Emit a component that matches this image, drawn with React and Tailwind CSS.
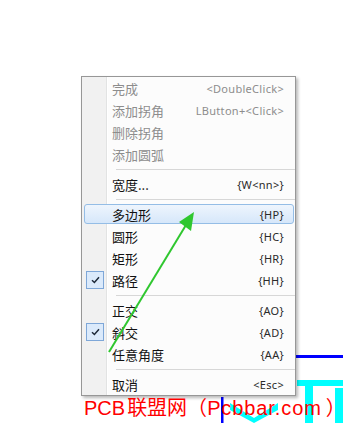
import React from "react";

const items = [
  { label: "完成", key: "<DoubleClick>", disabled: true },
  { label: "添加拐角", key: "LButton+<Click>", disabled: true },
  { label: "删除拐角", disabled: true },
  { label: "添加圆弧", disabled: true },
  { sep: true },
  { label: "宽度...", key: "{W<nn>}" },
  { sep: true },
  { label: "多边形", key: "{HP}", hot: true },
  { label: "圆形", key: "{HC}" },
  { label: "矩形", key: "{HR}" },
  { label: "路径", key: "{HH}", checked: true },
  { sep: true },
  { label: "正交", key: "{AO}" },
  { label: "斜交", key: "{AD}", checked: true },
  { label: "任意角度", key: "{AA}" },
  { sep: true },
  { label: "取消", key: "<Esc>" },
];

function Check() {
  return (
    <div className="ml-[1px] flex h-[18px] w-[18px] items-center justify-center border border-[#7ea7d8] bg-[#dbeafb]">
      <svg width="9" height="8" viewBox="0 0 9 8">
        <path d="M1 4.2 L3.4 6.5 L8 1.2" fill="none" stroke="#1e2a3a" strokeWidth="1.5" />
      </svg>
    </div>
  );
}

function MenuItem({ item }) {
  const box = item.hot
    ? "rounded-[3px] border border-[#94bde6] bg-[linear-gradient(to_bottom,#eef5fd,#d6e7fa)]"
    : "border border-transparent";
  return (
    <div className="h-[22px] py-[1px] pl-[2px] pr-[1px]">
      <div className={"flex h-full items-center " + box}>
        <div className="w-[27px]">{item.checked ? <Check /> : null}</div>
        <div
          className={
            "flex-1 text-[13px] leading-none " +
            (item.disabled ? "text-[#8d8d8d]" : "text-[#111]")
          }
        >
          {item.label}
        </div>
        {item.key ? (
          <div
            className={
              "pr-[9px] text-[11px] leading-none tracking-[0.3px] " +
              (item.disabled ? "text-[#8d8d8d]" : "text-[#2a2a2a]")
            }
            style={{ fontFamily: '"Noto Sans", "Open Sans", sans-serif' }}
          >
            {item.key}
          </div>
        ) : null}
      </div>
    </div>
  );
}

export default function App() {
  return (
    <div
      className="relative h-[423px] w-[343px] overflow-hidden bg-white"
      style={{ fontFamily: '"Noto Sans CJK SC", "Noto Sans", sans-serif' }}
    >
      {/* drawing behind the menu */}
      <svg className="absolute left-0 top-0" width="343" height="423" viewBox="0 0 343 423">
        <rect x="200" y="355" width="143" height="3" fill="#0000ff" />
        <rect x="221" y="397" width="2.5" height="26" fill="#0000ff" />
        <rect x="297" y="380" width="46" height="6" fill="#00ffff" />
        <rect x="305" y="380" width="8" height="43" fill="#00ffff" />
        <rect x="335" y="388" width="8" height="35" fill="#00ffff" />
        <path d="M230 403 L254 418 L278 403 L278 410 L254 423 L230 410 Z" fill="#00ffff" />
      </svg>

      <div className="relative pl-[81px] pt-[76px]">
        <div className="w-[215px] border border-[#979797] bg-[linear-gradient(to_right,#f1f1f1_0,#f1f1f1_24px,#e2e3e3_24px,#e2e3e3_25px,#ffffff_25px,#ffffff_26px,#fcfcfc_26px)] shadow-[2px_2px_3px_rgba(0,0,0,0.28)]">
          {items.map((item, i) =>
            item.sep ? (
              <div key={i} className="h-[8px] pl-[34px] pt-[4px]">
                <div className="h-[1px] bg-[#d7d7d7]" />
              </div>
            ) : (
              <MenuItem key={i} item={item} />
            )
          )}
        </div>

        <div
          className="-ml-[81px] whitespace-nowrap pl-[84px] text-[20px] leading-[24px] text-[#ff0000]"
          style={{ fontFamily: '"Liberation Sans", "Noto Sans CJK SC", sans-serif' }}
        >
          <span>PCB</span>
          <span className="ml-[2px]">联盟网（</span>
          <span className="tracking-[0.9px]">Pcbbar.com</span>
          <span className="ml-[4px]">）</span>
        </div>
      </div>

      {/* green arrow drawn over the menu */}
      <svg className="pointer-events-none absolute left-0 top-0" width="343" height="423" viewBox="0 0 343 423">
        <line x1="109" y1="352" x2="186" y2="225" stroke="#2fc72f" strokeWidth="2" />
        <polygon points="194,212 179,222 191,231" fill="#2fc72f" />
      </svg>
    </div>
  );
}
